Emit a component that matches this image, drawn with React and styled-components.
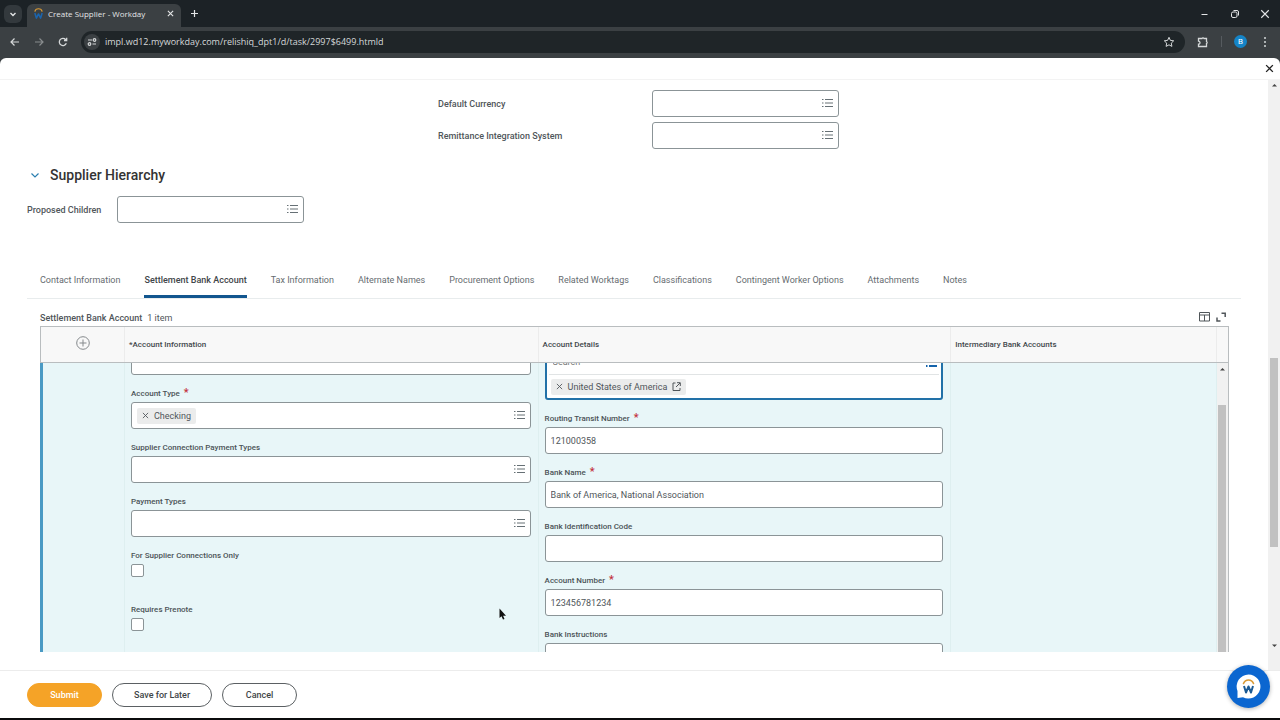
import { useState } from "react"
import styled, { createGlobalStyle, css } from "styled-components"

const GlobalStyle = createGlobalStyle`
  * {
    box-sizing: border-box;
  }

  body {
    margin: 0;
    background: #3b4043;
    font-family: Roboto, "Liberation Sans", sans-serif;
    font-size: 9px;
    color: #50565a;
  }

  button, input {
    font: inherit;
    color: inherit;
  }

  button {
    padding: 0;
    border: none;
    background: none;
    cursor: pointer;
  }

  svg {
    display: block;
    flex: none;
  }
`

const Window = styled.div`
  display: flex;
  flex-direction: column;

  height: 100vh;
  overflow: hidden;
  border-bottom: 2px solid #0b0c0d;
`

/* ---------- browser ---------- */

const TabStrip = styled.div`
  display: flex;
  align-items: center;

  height: 27px;
  padding-left: 4px;
  background: #1c2226;
  color: #e3e5e6;
  font-family: "Open Sans", sans-serif;
`

const TabSearch = styled.button`
  display: grid;
  place-items: center;

  width: 18px;
  height: 18px;
  border-radius: 6px;
  background: #33393d;
`

const BrowserTab = styled.div`
  display: flex;
  align-items: center;
  align-self: flex-end;

  width: 154px;
  height: 23px;
  margin-left: 5px;
  padding: 0 7px 4px 6px;
  border-radius: 6px 6px 0 0;
  background: #3b4043;
  font-size: 8px;

  span {
    flex: 1;
    margin-left: 4px;
    white-space: nowrap;
  }
`

const NewTab = styled.button`
  margin-left: 9px;
`

const WindowButtons = styled.div`
  display: flex;
  gap: 20px;

  margin-left: auto;
  padding-right: 10px;
`

const Toolbar = styled.div`
  display: flex;
  align-items: center;
  gap: 12px;

  height: 31px;
  padding: 0 9px 2px;
  background: #3b4043;
  color: #d5d8d9;
`

const NavButton = styled.button`
  opacity: ${({ $dim }) => ($dim ? 0.5 : 1)};
`

const AddressBar = styled.div`
  display: flex;
  flex: 1;
  align-items: center;

  height: 22px;
  padding: 0 10px 0 3px;
  border-radius: 11px;
  background: #1f2528;

  input {
    flex: 1;
    min-width: 0;
    padding: 0 0 0 5px;
    border: none;
    outline: none;
    background: none;
    font-family: "Open Sans", sans-serif;
    font-size: 9px;
  }
`

const SiteInfo = styled.button`
  display: grid;
  place-items: center;

  width: 16px;
  height: 16px;
  border-radius: 50%;
  background: #3b4043;
`

const ToolDivider = styled.div`
  width: 1px;
  height: 11px;
  background: #565b5f;
`

const Profile = styled.button`
  width: 13px;
  height: 13px;
  border-radius: 50%;
  background: #1584c7;
  color: #fff;
  font-size: 8px;
  line-height: 13px;
`

/* ---------- page ---------- */

const TaskBar = styled.div`
  display: flex;
  align-items: center;
  justify-content: flex-end;

  height: 22px;
  padding-right: 6px;
  border-radius: 6px 6px 0 0;
  border-bottom: 1px solid #f3f3f3;
  background: #fff;
  color: #222;
`

const Scroller = styled.div`
  display: flex;
  flex: 1;
  min-height: 0;

  background: #fff;
`

const Content = styled.main`
  flex: 1;
  min-width: 0;
  overflow: hidden;
  padding: 10px 27px 0;
`

const PageScrollbar = styled.div`
  display: flex;
  flex-direction: column;
  align-items: center;

  width: 12px;
  padding: 3px 0 22px;
  background: #f1f1f1;
`

const Thumb = styled.div`
  width: 8px;
  background: #c1c1c1;
`

const PageThumb = styled(Thumb)`
  height: 189px;
  margin: 271px 0 auto;
`

const SummaryColumns = styled.section`
  display: grid;
  grid-template-columns: 411fr 803fr;
`

const SummaryFields = styled.div`
  display: grid;
  grid-column: 2;
  gap: 5px;
`

const InlineField = styled.div`
  display: grid;
  grid-template-columns: ${({ $labelWidth }) => $labelWidth} 187px;
  align-items: center;

  font-weight: 500;
`

const SectionHeading = styled.h2`
  display: flex;
  align-items: center;
  gap: 10px;

  height: 18px;
  margin: 17px 0 12px;
  padding-left: 3px;
  color: #333;
  font-size: 14px;
  font-weight: 500;
`

const Control = styled.div`
  display: flex;
  align-items: center;

  width: 100%;
  height: 27px;
  padding: 0 5px;
  border: 1px solid #8b9497;
  border-radius: 3px;
  background: #fff;
  font-weight: 400;

  input {
    flex: 1;
    min-width: 0;
    padding: 0;
    border: none;
    outline: none;
    background: none;
  }
`

const Chip = styled.span`
  display: flex;
  align-items: center;
  gap: 5px;

  height: 16px;
  padding: 0 5px;
  border-radius: 2px;
  background: #ebecec;
`

const TabList = styled.nav`
  display: flex;
  gap: 24px;

  margin-top: 48px;
  padding-left: 13px;
  border-bottom: 1px solid #e8eced;
`

const Tab = styled.a`
  height: 27px;
  padding-top: 1px;
  color: #666c70;
  line-height: 16px;
  text-decoration: none;
  white-space: nowrap;

  ${({ $active }) => $active && css`
    border-bottom: 3px solid #12568f;
    color: #3f464a;
    font-weight: 500;
  `}
`

const GridSection = styled.section`
  margin: 10px 12px 0 13px;
`

const GridTitle = styled.div`
  display: flex;
  align-items: center;
  gap: 5px;

  height: 17px;

  h3 {
    margin: 0;
    font-size: inherit;
    font-weight: 500;
  }
`

const GridActions = styled.div`
  display: flex;
  gap: 6px;

  margin-left: auto;
  padding: 0 3px 2px 0;
`

const Grid = styled.table`
  display: block;

  border-right: 1px solid #b9bdbf;

  thead, tbody {
    display: block;
  }
`

const HeadRow = styled.tr`
  display: grid;
  grid-template-columns: 84px 414fr 413fr 266fr 11px;

  height: 37px;
  border: solid #b9bdbf;
  border-width: 1px 0 1px 1px;
  background: #f8f8f8;

  th {
    padding: 0 0 0 4px;
    border-right: 1px solid #ececec;
    color: #41474b;
    font-size: 8px;
    font-weight: 500;
    line-height: 35px;
    text-align: left;
  }

  th:first-child {
    padding: 0;
  }

  th:last-child {
    border-right: none;
  }
`

const AddRow = styled.button`
  display: grid;
  place-items: center;

  width: 100%;
  height: 32px;
  color: #85898c;
`

const BodyRow = styled.tr`
  display: grid;
  grid-template-columns: 82px 414fr 413fr 266fr 11px;

  height: 289px;
  overflow: hidden;
  border-left: 3px solid #4a9ac4;
  background: #e8f6f8;
`

const Cell = styled.td`
  min-width: 0;
  padding: 0 7px 0 6px;
  border-right: 1px solid #deeff0;
`

const GridScrollbar = styled.td`
  display: flex;
  flex-direction: column;
  align-items: center;

  padding: 4px 0 0;
  background: #f1f1f1;

  div {
    flex: 1;
    margin-top: 34px;
  }
`

/* the row is scrolled so its first fields sit partly under the header */
const FieldStack = styled.div`
  display: grid;
  gap: 11px;

  margin-top: -15px;
`

const StackedLabel = styled.label`
  display: block;

  color: #4b5357;
  font-size: 8px;
  font-weight: 500;
  line-height: 16px;
`

const Required = styled.span`
  margin-left: 2px;
  color: #c22f3b;
  font-size: 11px;
  line-height: 10px;
`

const CountryPrompt = styled.div`
  height: 52px;
  padding: 0 2px;
  border: 2px solid #2271a8;
  border-radius: 3px;
  background: #fff;
`

const PromptRow = styled.div`
  display: flex;
  align-items: center;

  height: 24px;
  padding: 0 2px;

  & + & {
    border-top: 1px solid #e1e4e5;
  }

  input {
    flex: 1;
    padding: 0 0 0 2px;
    border: none;
    outline: none;
    background: none;
  }
`

const CheckField = styled.div`
  padding-bottom: 14px;

  input {
    display: block;
    appearance: none;
    width: 13px;
    height: 13px;
    margin: 0;
    border: 1px solid #8b9497;
    border-radius: 2px;
    background: #fff;
  }

  input:checked {
    background: #12568f;
  }
`

const Footer = styled.footer`
  display: flex;
  align-items: center;
  gap: 10px;

  height: 48px;
  padding: 0 27px;
  border-top: 1px solid #ececec;
  background: #fff;
`

const ActionButton = styled.button`
  min-width: 75px;
  height: 24px;
  padding: 0 21px;
  border: 1px solid ${({ $primary }) => ($primary ? "#f5a327" : "#5b6063")};
  border-radius: 12px;
  background: ${({ $primary }) => ($primary ? "#f5a327" : "#fff")};
  color: ${({ $primary }) => ($primary ? "#fff" : "#3f4548")};
  font-weight: 500;
`

const ChatButton = styled.button`
  position: fixed;
  right: 10px;
  bottom: 12px;

  display: grid;
  place-items: center;

  width: 43px;
  height: 43px;
  border-radius: 50%;
  background: #0b66d0;
  box-shadow: 0 1px 4px rgba(0, 0, 0, 0.3);
`

const Pointer = styled.svg`
  position: fixed;
  left: 499px;
  top: 608px;
`

/* ---------- icons ---------- */

const Icon = ({ size = 12, width = 1, children }) => (
  <svg width={size} height={size} viewBox={`0 0 ${size} ${size}`} fill="none" stroke="currentColor" strokeWidth={width} aria-hidden="true">
    {children}
  </svg>
)

const CloseIcon = ({ size = 8, width = 1 }) => (
  <svg width={size} height={size} viewBox="0 0 8 8" fill="none" stroke="currentColor" strokeWidth={width} aria-hidden="true">
    <path d="M1 1l6 6M7 1L1 7" />
  </svg>
)

const ListIcon = () => (
  <Icon size={11}>
    <path d="M3 1.500h8M3 5h8M3 8.500h8" stroke="#667075" />
    <path d="M0 1.500h1.500M0 5h1.500M0 8.500h1.500" stroke="#667075" />
  </Icon>
)

const BlueListIcon = () => (
  <Icon size={11} width={2}>
    <path d="M3 1h8M3 5h8M3 9h8M0 1h1.500M0 5h1.500M0 9h1.500" stroke="#1463ab" />
  </Icon>
)

const WorkdayMark = ({ size }) => (
  <svg width={size} height={size} viewBox="0 0 12 12" fill="none" aria-hidden="true">
    <path d="M2 4C2.400 1.800 4 0.800 6 0.800s3.600 1 4 3.200" stroke="#d99a35" strokeWidth="1.300" />
    <path d="M2 5.500l1.700 5.500L6 6.500 8.300 11 10 5.500" stroke="#1b64ad" strokeWidth="1.700" strokeLinejoin="round" />
  </svg>
)

function Prompt({ id, label, chip }) {
  return (
    <Control>
      {chip && <Chip><CloseIcon size={7} />{chip}</Chip>}
      <input id={id} type="text" aria-label={label} />
      <button type="button" aria-label="Open list"><ListIcon /></button>
    </Control>
  )
}

function StackedField({ id, label, required, value, prompt, chip }) {
  return (
    <div>
      <StackedLabel htmlFor={id}>{label} {required && <Required>*</Required>}</StackedLabel>
      {prompt ?
        <Prompt id={id} chip={chip} /> :
        <Control><input id={id} type="text" defaultValue={value} /></Control>
      }
    </div>
  )
}

const tabs = [
  "Contact Information",
  "Settlement Bank Account",
  "Tax Information",
  "Alternate Names",
  "Procurement Options",
  "Related Worktags",
  "Classifications",
  "Contingent Worker Options",
  "Attachments",
  "Notes",
]

function Browser() {
  return (
    <>
      <TabStrip>
        <TabSearch aria-label="Search tabs"><Icon size={8} width={1.4}><path d="M1.500 3L4 5.500 6.500 3" /></Icon></TabSearch>
        <BrowserTab>
          <WorkdayMark size={11} />
          <span>Create Supplier - Workday</span>
          <button aria-label="Close tab"><CloseIcon size={7} width={1.3} /></button>
        </BrowserTab>
        <NewTab aria-label="New tab"><Icon size={9} width={1.2}><path d="M4.500 1v7M1 4.500h7" /></Icon></NewTab>
        <WindowButtons>
          <button aria-label="Minimize"><Icon size={10}><path d="M1.500 5.500h6" /></Icon></button>
          <button aria-label="Restore">
            <Icon size={10}>
              <rect x="1.500" y="3" width="5.500" height="5.500" rx="1.500" />
              <path d="M3.500 1.500H7A1.500 1.500 0 0 1 8.500 3v3.500" />
            </Icon>
          </button>
          <button aria-label="Close"><CloseIcon size={10} width={0.9} /></button>
        </WindowButtons>
      </TabStrip>
      <Toolbar>
        <NavButton aria-label="Back"><Icon width={1.2}><path d="M10 6H2M5.500 2.500L2 6l3.500 3.500" /></Icon></NavButton>
        <NavButton aria-label="Forward" $dim><Icon width={1.2}><path d="M2 6h8M6.500 2.500L10 6 6.500 9.500" /></Icon></NavButton>
        <NavButton aria-label="Reload"><Icon width={1.3}><path d="M9.300 7.200A3.600 3.600 0 1 1 8.600 3.500L9.500 4.300M9.700 1.800v2.700H7" /></Icon></NavButton>
        <AddressBar>
          <SiteInfo aria-label="Site information">
            <Icon size={10} width={1.2}>
              <path d="M1 3h4M5.500 7H9" />
              <circle cx="7.500" cy="3" r="1.300" />
              <circle cx="2.500" cy="7" r="1.300" />
            </Icon>
          </SiteInfo>
          <input type="text" aria-label="Address" defaultValue="impl.wd12.myworkday.com/relishiq_dpt1/d/task/2997$6499.htmld" />
          <button aria-label="Bookmark">
            <Icon><path d="M6 1.300l1.400 3.100 3.300.400-2.400 2.300.600 3.300L6 8.800l-2.900 1.600.600-3.300L1.300 4.800l3.300-.400z" /></Icon>
          </button>
        </AddressBar>
        <button aria-label="Extensions">
          <Icon width={1.3}><path d="M1.500 2.500H5a1.100 1.100 0 0 1 2 0h2.500V5.500a1.100 1.100 0 0 1 0 2V10.500h-8V8.200a1.500 1.500 0 0 0 0-3z" /></Icon>
        </button>
        <ToolDivider />
        <Profile aria-label="Profile">B</Profile>
        <button aria-label="Menu">
          <svg width="12" height="12" viewBox="0 0 12 12" fill="currentColor">
            <circle cx="6" cy="2" r="1" /><circle cx="6" cy="6" r="1" /><circle cx="6" cy="10" r="1" />
          </svg>
        </button>
      </Toolbar>
    </>
  )
}

function BankAccountGrid() {
  return (
    <GridSection>
      <GridTitle>
        <h3>Settlement Bank Account</h3>
        <span>1 item</span>
        <GridActions>
          <button aria-label="Configure columns">
            <Icon size={11}><path d="M.500 1.500h10v8.500H.500zM.500 4h10M5.500 4v6" /></Icon>
          </button>
          <button aria-label="Full screen">
            <Icon size={10} width={1.500}><path d="M5.500 1.200h3.700v3.700M1 5.500v3.500h3.500" /></Icon>
          </button>
        </GridActions>
      </GridTitle>
      <Grid>
        <thead>
          <HeadRow>
            <th>
              <AddRow aria-label="Add row">
                <Icon size={14}><circle cx="7" cy="7" r="6.300" /><path d="M7 3.500v7M3.500 7h7" /></Icon>
              </AddRow>
            </th>
            <th>*Account Information</th>
            <th>Account Details</th>
            <th>Intermediary Bank Accounts</th>
            <th />
          </HeadRow>
        </thead>
        <tbody>
          <BodyRow>
            <Cell />
            <Cell>
              <FieldStack>
                <Control><input type="text" aria-label="Account nickname" /></Control>
                <StackedField id="accountType" label="Account Type" required prompt chip="Checking" />
                <StackedField id="connectionTypes" label="Supplier Connection Payment Types" prompt />
                <StackedField id="paymentTypes" label="Payment Types" prompt />
                <CheckField>
                  <StackedLabel htmlFor="connectionsOnly">For Supplier Connections Only</StackedLabel>
                  <input id="connectionsOnly" type="checkbox" />
                </CheckField>
                <CheckField>
                  <StackedLabel htmlFor="prenote">Requires Prenote</StackedLabel>
                  <input id="prenote" type="checkbox" />
                </CheckField>
              </FieldStack>
            </Cell>
            <Cell>
              <FieldStack>
                <CountryPrompt>
                  <PromptRow>
                    <input type="text" placeholder="Search" aria-label="Country" />
                    <button aria-label="Open list"><BlueListIcon /></button>
                  </PromptRow>
                  <PromptRow>
                    <Chip>
                      <CloseIcon size={7} />
                      United States of America
                      <Icon size={9}><path d="M3.500 1H1v7.500h7V6M5 .700h3.300V4M8 1L4 5" /></Icon>
                    </Chip>
                  </PromptRow>
                </CountryPrompt>
                <StackedField id="routing" label="Routing Transit Number" required value="121000358" />
                <StackedField id="bankName" label="Bank Name" required value="Bank of America, National Association" />
                <StackedField id="bankCode" label="Bank Identification Code" />
                <StackedField id="accountNumber" label="Account Number" required value="123456781234" />
                <StackedField id="instructions" label="Bank Instructions" />
              </FieldStack>
            </Cell>
            <Cell />
            <GridScrollbar>
              <svg width="5" height="4" viewBox="0 0 5 4"><path d="M0 3.500L2.500 1 5 3.500z" fill="#444" /></svg>
              <Thumb />
            </GridScrollbar>
          </BodyRow>
        </tbody>
      </Grid>
    </GridSection>
  )
}

function App() {
  const [active, setActive] = useState("Settlement Bank Account")

  return (
    <Window>
      <GlobalStyle />
      <Browser />
      <TaskBar>
        <button aria-label="Close task"><CloseIcon size={9} width={1.200} /></button>
      </TaskBar>
      <Scroller>
        <Content>
          <SummaryColumns>
            <SummaryFields>
              <InlineField $labelWidth="214px">
                <label htmlFor="currency">Default Currency</label>
                <Prompt id="currency" />
              </InlineField>
              <InlineField $labelWidth="214px">
                <label htmlFor="remittance">Remittance Integration System</label>
                <Prompt id="remittance" />
              </InlineField>
            </SummaryFields>
          </SummaryColumns>

          <SectionHeading>
            <Icon size={10} width={1.200}><path d="M1.500 3.500L5 7l3.500-3.500" stroke="#2b7fb0" /></Icon>
            Supplier Hierarchy
          </SectionHeading>
          <InlineField $labelWidth="90px">
            <label htmlFor="children">Proposed Children</label>
            <Prompt id="children" />
          </InlineField>

          <TabList>
            {tabs.map((tab) => (
              <Tab key={tab} href="#" $active={tab === active} onClick={() => setActive(tab)}>{tab}</Tab>
            ))}
          </TabList>
          <BankAccountGrid />
        </Content>
        <PageScrollbar>
          <svg width="5" height="4" viewBox="0 0 5 4"><path d="M0 3.500L2.500 1 5 3.500z" fill="#444" /></svg>
          <PageThumb />
          <svg width="5" height="4" viewBox="0 0 5 4"><path d="M0 .500L2.500 3 5 .500z" fill="#444" /></svg>
        </PageScrollbar>
      </Scroller>
      <Footer>
        <ActionButton $primary>Submit</ActionButton>
        <ActionButton>Save for Later</ActionButton>
        <ActionButton>Cancel</ActionButton>
      </Footer>
      <ChatButton aria-label="Chat">
        <svg width="25" height="25" viewBox="0 0 25 25" fill="none">
          <path d="M12.500.500a12 12 0 1 1-5.500 22.700L1.500 24V17A12 12 0 0 1 12.500.500z" fill="#fff" />
          <path d="M7.500 9.500C8.500 7 10.500 6 12.500 6s4 1 5 3.500" stroke="#d99a35" strokeWidth="1.600" strokeLinecap="round" />
          <path d="M8 12l2 6.500 2.500-6 2.500 6L17 12" stroke="#1b5a94" strokeWidth="2" strokeLinejoin="round" />
        </svg>
      </ChatButton>
      <Pointer width="8" height="12" viewBox="0 0 8 12">
        <path d="M.500.500v9.500l2-1.800L4 11.500l1.500-.600-1.400-3.200H7z" fill="#111" />
      </Pointer>
    </Window>
  )
}

export default App
